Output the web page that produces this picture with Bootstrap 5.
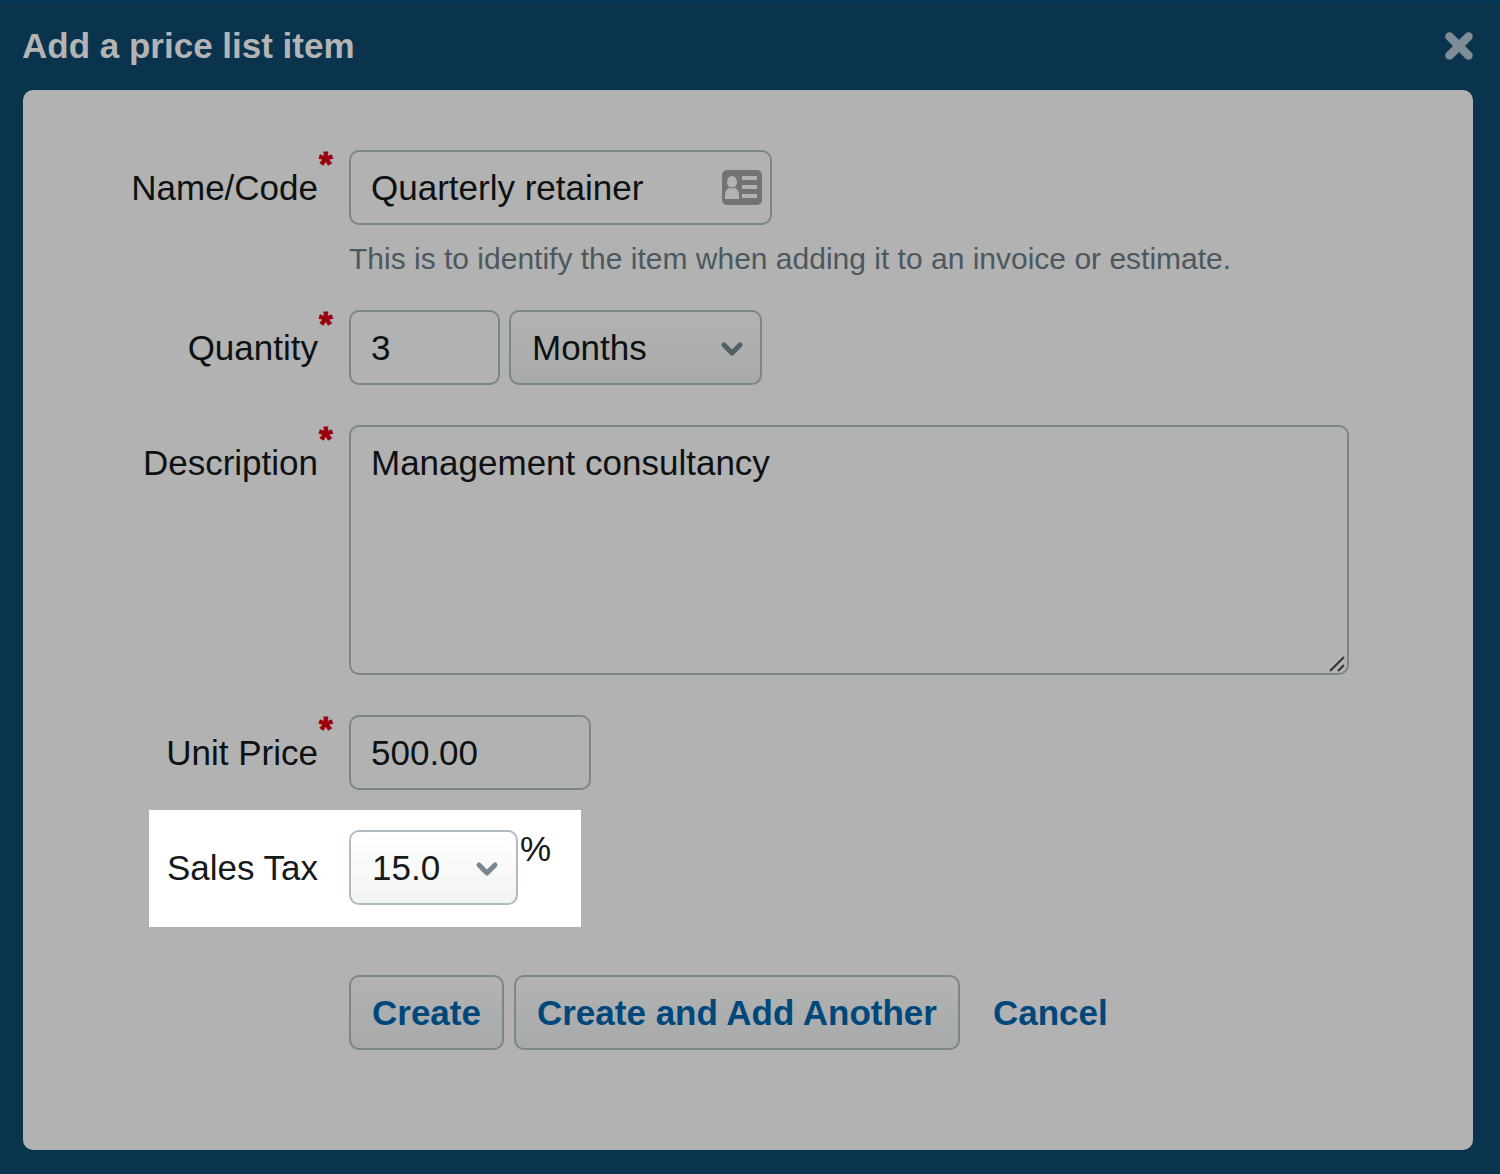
<!DOCTYPE html>
<html lang="en">
<head>
<meta charset="utf-8">
<meta name="viewport" content="width=device-width, initial-scale=1">
<title>Add a price list item</title>
<link href="https://cdn.jsdelivr.net/npm/bootstrap@5.3.0/dist/css/bootstrap.min.css" rel="stylesheet">
<style>
  body { background: #0a344d; border-top: 2px solid #00355a; min-height: 100vh; color: #0d1112; font-family: "Liberation Sans", Arial, sans-serif; font-size: 35px; line-height: 43px; }
  .dialog-head { height: 88px; padding: 0 27px 0 22px; }
  .dialog-title { font-size: 35px; line-height: 43px; padding-bottom: 2px; color: #b4b4b4; }
  .close-btn { line-height: 0; }
  .sheet { background: #b2b2b2; border-radius: 10px; margin: 0 27px 24px 23px; padding: 60px 0 100px; }
  .field-row { padding-right: 124px; margin-bottom: 40px; }
  .field-label { flex: 0 0 326px; padding: 16px 31px 0 0; text-align: right; }
  .star { position: absolute; left: 100%; top: -26px; padding-left: 1px; color: #9a000c; font-weight: bold; -webkit-text-stroke: 1px #9a000c; }
  .field { height: 75px; border: 2px solid #7b8689; border-radius: 10px; background-color: transparent; color: #0d1112; font-size: 35px; line-height: 43px; padding: 14px 20px; }
  .field-area { height: 250px; resize: none; display: block; }
  .w-name { width: 423px; }
  .w-qty { width: 151px; }
  .w-unit { width: 253px; }
  .w-price { width: 242px; }
  .w-tax { width: 169px; }
  .qty-group { gap: 9px; }
  .pick { padding-left: 21px; padding-right: 48px; background-repeat: no-repeat; background-size: 24px 16px, 100% 100%; background-position: right 16px top 29px, 0 0;
    background-image: url("data:image/svg+xml,%3Csvg xmlns='http://www.w3.org/2000/svg' viewBox='0 0 24 16'%3E%3Cpath d='M4 4l8 8 8-8' fill='none' stroke='%23535f67' stroke-width='5' stroke-linecap='round' stroke-linejoin='round'/%3E%3C/svg%3E"), linear-gradient(#b2b2b2, #a9aaaa); }
  .pick-lit { border-color: #b0bbc0; color: #15191a; background-position: right 17px top 29px, 0 0;
    background-image: url("data:image/svg+xml,%3Csvg xmlns='http://www.w3.org/2000/svg' viewBox='0 0 24 16'%3E%3Cpath d='M4 4l8 8 8-8' fill='none' stroke='%23778893' stroke-width='5' stroke-linecap='round' stroke-linejoin='round'/%3E%3C/svg%3E"), linear-gradient(#fff, #f2f3f4); }
  .contact-icon { position: absolute; right: 10px; top: 20px; }
  .grip { position: absolute; right: 3px; bottom: 2px; pointer-events: none; }
  .hint { font-size: 30px; line-height: 36px; color: #4b5860; margin: 16px 0 -7px; }
  .spotlight { background: #fff; color: #15191a; margin: -20px 0 48px 126px; padding: 20px 30px 22px 0; }
  .spotlight .field-label { flex-basis: 200px; }
  .percent { padding-left: 2px; line-height: 37px; }
  .actions { padding-left: 326px; gap: 10px; }
  .push { height: 75px; border: 2px solid #7b8689; border-radius: 10px; background: linear-gradient(#b2b2b2, #a8aaab); color: #00477c; font-size: 35px; line-height: 43px; padding: 14px 21px; }
  .cancel { color: #00477c; margin-left: 23px; }
</style>
<script defer src="https://cdn.jsdelivr.net/npm/bootstrap@5.3.0/dist/js/bootstrap.bundle.min.js"></script>
</head>
<body>
<header class="dialog-head d-flex align-items-center justify-content-between">
  <h1 class="dialog-title fw-bold m-0">Add a price list item</h1>
  <button type="button" class="close-btn border-0 bg-transparent p-0" aria-label="Close">
    <svg width="28" height="28" viewBox="0 0 28 28"><path d="M4.500 4.500l19 19M23.500 4.500l-19 19" stroke="#7f8d96" stroke-width="8.500" stroke-linecap="round"/></svg>
  </button>
</header>
<main class="sheet">
  <form>
    <div class="field-row d-flex align-items-start">
      <label class="field-label" for="name"><span class="position-relative">Name/Code<span class="star">*</span></span></label>
      <div class="flex-grow-1">
        <div class="position-relative w-name">
          <input id="name" class="form-control field w-name" type="text" value="Quarterly retainer">
          <svg class="contact-icon" width="40" height="35" viewBox="0 0 40 35" aria-hidden="true">
            <rect width="40" height="35" rx="5" fill="#737373"/>
            <g fill="#b2b2b2"><ellipse cx="10" cy="12" rx="5" ry="6"/><path d="M3 29v-4c0-4 2-6 5-8h4c3 2 5 4 5 8v4z"/><path d="M20 6h15v4H20zM20 15h15v4H20zM20 24h15v4H20z"/></g>
            <path d="M6 17q4 2 8 0" fill="none" stroke="#737373"/>
          </svg>
        </div>
        <p class="hint">This is to identify the item when adding it to an invoice or estimate.</p>
      </div>
    </div>
    <div class="field-row d-flex align-items-start">
      <label class="field-label" for="qty"><span class="position-relative">Quantity<span class="star">*</span></span></label>
      <div class="qty-group d-flex">
        <input id="qty" class="form-control field w-qty" type="text" value="3">
        <select class="form-select field pick w-unit" aria-label="Unit"><option>Months</option><option>Weeks</option><option>Days</option><option>Hours</option></select>
      </div>
    </div>
    <div class="field-row d-flex align-items-start">
      <label class="field-label" for="desc"><span class="position-relative">Description<span class="star">*</span></span></label>
      <div class="position-relative flex-grow-1">
        <textarea id="desc" class="form-control field field-area">Management consultancy</textarea>
        <svg class="grip" width="17" height="17" viewBox="0 0 17 17" aria-hidden="true"><path d="M1 15L15 1M9 15l6-6" stroke="#333" stroke-width="2"/></svg>
      </div>
    </div>
    <div class="field-row d-flex align-items-start">
      <label class="field-label" for="price"><span class="position-relative">Unit Price<span class="star">*</span></span></label>
      <input id="price" class="form-control field w-price" type="text" value="500.00">
    </div>
    <div class="spotlight d-inline-flex align-items-start">
      <label class="field-label" for="tax">Sales Tax</label>
      <select id="tax" class="form-select field pick pick-lit w-tax"><option>15.0</option><option>0.0</option></select>
      <span class="percent">%</span>
    </div>
    <div class="actions d-flex align-items-center">
      <button type="submit" class="push fw-bold">Create</button>
      <button type="button" class="push fw-bold">Create and Add Another</button>
      <a class="cancel fw-bold text-decoration-none" href="#">Cancel</a>
    </div>
  </form>
</main>
</body>
</html>
